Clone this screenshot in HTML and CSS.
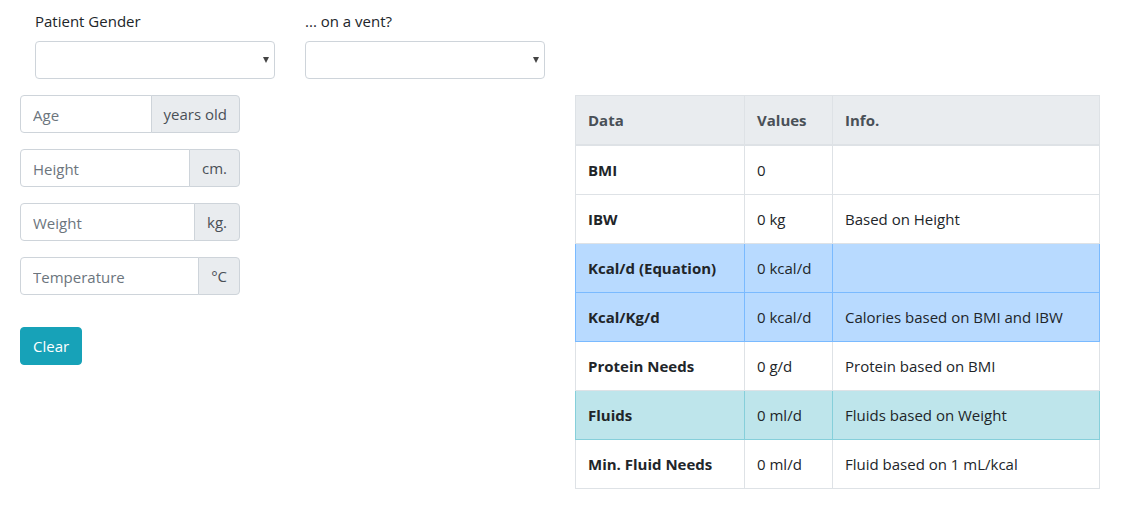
FILE: index.html
```html
<!DOCTYPE html>
<html lang="en">
<head>
<meta charset="utf-8">
<title>Nutrition Calculator</title>
<link rel="stylesheet" href="styles.css">
</head>
<body>
<div class="page">
  <div class="selects">
    <div class="field">
      <label class="label">Patient Gender</label>
      <div class="select-wrap">
        <select class="select"><option></option><option>Male</option><option>Female</option></select>
        <span class="caret"></span>
      </div>
    </div>
    <div class="field">
      <label class="label">... on a vent?</label>
      <div class="select-wrap">
        <select class="select"><option></option><option>Yes</option><option>No</option></select>
        <span class="caret"></span>
      </div>
    </div>
  </div>
  <div class="main">
    <div class="inputs">
      <div class="group"><input class="input" placeholder="Age"><span class="addon">years old</span></div>
      <div class="group"><input class="input" placeholder="Height"><span class="addon">cm.</span></div>
      <div class="group"><input class="input" placeholder="Weight"><span class="addon">kg.</span></div>
      <div class="group"><input class="input" placeholder="Temperature"><span class="addon">°C</span></div>
      <button class="btn">Clear</button>
    </div>
    <table class="table">
      <colgroup><col class="c1"><col class="c2"><col class="c3"></colgroup>
      <thead>
        <tr><th>Data</th><th>Values</th><th>Info.</th></tr>
      </thead>
      <tbody>
        <tr><th>BMI</th><td>0</td><td></td></tr>
        <tr><th>IBW</th><td>0 kg</td><td>Based on Height</td></tr>
        <tr class="primary"><th>Kcal/d (Equation)</th><td>0 kcal/d</td><td></td></tr>
        <tr class="primary"><th>Kcal/Kg/d</th><td>0 kcal/d</td><td>Calories based on BMI and IBW</td></tr>
        <tr><th>Protein Needs</th><td>0 g/d</td><td>Protein based on BMI</td></tr>
        <tr class="info"><th>Fluids</th><td>0 ml/d</td><td>Fluids based on Weight</td></tr>
        <tr><th>Min. Fluid Needs</th><td>0 ml/d</td><td>Fluid based on 1 mL/kcal</td></tr>
      </tbody>
    </table>
  </div>
</div>
</body>
</html>
```
FILE: styles.css
```css
* { box-sizing: border-box; }
html, body { margin: 0; padding: 0; background: #fff; }
body {
  font-family: "Open Sans", "Noto Sans", "Liberation Sans", sans-serif;
  font-size: 15px;
  line-height: 24px;
  color: #212529;
}
.page { padding: 9px 0 0 20px; }
.selects { display: flex; gap: 30px; padding-left: 15px; margin-bottom: 16px; }
.field { width: 240px; display: flex; flex-direction: column; }
.label { display: block; margin-bottom: 8px; }
.select-wrap { position: relative; }
.select {
  -webkit-appearance: none; appearance: none;
  width: 240px; height: 38px;
  border: 1px solid #ced4da; border-radius: 4px;
  background: #fff; font: inherit; color: #495057;
  padding: 6px 12px;
}
.caret {
  position: absolute; right: 6px; top: 16px;
  width: 0; height: 0;
  border-left: 3.5px solid transparent;
  border-right: 3.5px solid transparent;
  border-top: 6px solid #444;
}
.main { display: grid; grid-template-columns: 220px 525px; column-gap: 335px; align-items: start; }
.inputs { display: flex; flex-direction: column; align-items: flex-start; }
.group { display: flex; width: 220px; height: 38px; margin-bottom: 16px; }
.input {
  flex: 1; min-width: 0;
  border: 1px solid #ced4da; border-radius: 4px 0 0 4px;
  padding: 7px 12px 5px; font: inherit; color: #495057; background: #fff;
}
.input::placeholder { color: #6c757d; }
.addon {
  display: flex; align-items: center;
  padding: 6px 12px; margin-left: -1px;
  background: #e9ecef; color: #495057;
  border: 1px solid #ced4da; border-radius: 0 4px 4px 0;
  white-space: nowrap;
}
.btn {
  margin-top: 16px;
  background: #17a2b8; color: #fff;
  border: 1px solid #17a2b8; border-radius: 4px;
  font: inherit; padding: 6px 12px; height: 38px;
}
.table { border-collapse: collapse; width: 525px; table-layout: fixed; }
.c1 { width: 169px; }
.c2 { width: 88px; }
.table th, .table td {
  border: 1px solid #dee2e6;
  padding: 12px;
  text-align: left;
  vertical-align: top;
  height: 49px;
  white-space: nowrap;
}
.table th { font-weight: 700; }
.table td { font-weight: 400; }
.table thead th {
  background: #e9ecef; color: #495057;
  border-bottom: 2px solid #dee2e6;
  height: 49px;
}
.table tr.primary th, .table tr.primary td { background: #b8daff; border-color: #7abaff; }
.table tr.info th, .table tr.info td { background: #bee5eb; border-color: #86cfda; }
```
